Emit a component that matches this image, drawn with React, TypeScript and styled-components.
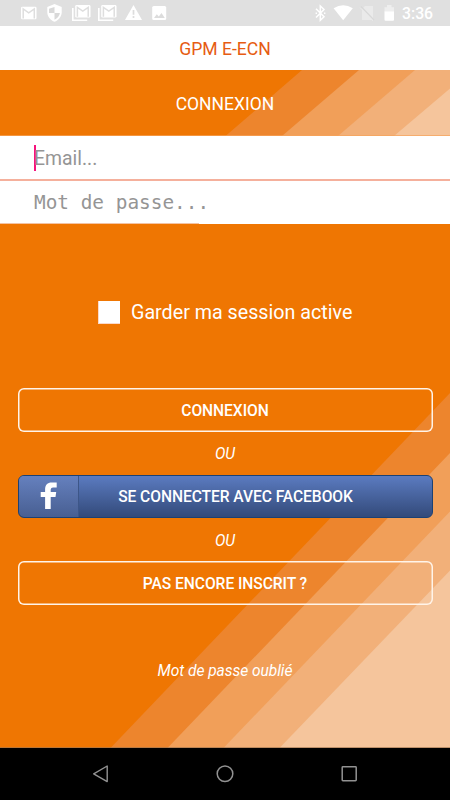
import React from 'react';
import styled, { createGlobalStyle } from 'styled-components';

const GlobalStyle = createGlobalStyle`
  * { box-sizing: border-box; }
  html, body { margin: 0; padding: 0; }
  body { font-family: Roboto, sans-serif; background: #000; overflow: hidden; }
`;

const Screen = styled.div`
  width: 450px;
  height: 800px;
  display: flex;
  flex-direction: column;
  background: #ef7602;
  color: #fff;
`;

const StatusBar = styled.div`
  height: 26px;
  flex: none;
  display: flex;
  align-items: center;
  justify-content: space-between;
  padding: 0 16px 0 19px;
  background: #e0e0e0;
`;

const Group = styled.div<{ $gap: number }>`
  display: flex;
  align-items: center;
  gap: ${(p) => p.$gap}px;
  svg { display: block; }
`;

const Clock = styled.span`
  width: 32px;
  font-size: 15.8px;
  font-weight: 500;
  line-height: 20px;
  padding-top: 2px;
  white-space: nowrap;
`;

const TitleBar = styled.div`
  height: 44px;
  flex: none;
  display: flex;
  align-items: center;
  justify-content: center;
  padding-top: 1px;
  background: #fff;
  color: #e65c12;
  font-size: 17.6px;
`;

const Header = styled.header`
  height: 66px;
  flex: none;
  display: grid;
  place-items: center;
  > * { grid-area: 1 / 1; }
`;

const Heading = styled.h1`
  margin: 0;
  padding-top: 1px;
  font-size: 17.5px;
  font-weight: 400;
  z-index: 1;
`;

const Field = styled.label<{ $mono?: boolean }>`
  flex: none;
  height: ${(p) => (p.$mono ? 43 : 45)}px;
  border-bottom: ${(p) => (p.$mono ? 'none' : '2px solid #f5b09c')};
  display: flex;
  align-items: center;
  padding: ${(p) => (p.$mono ? 0 : 2)}px 0 0 34px;
  background: #fff;
  color: #959595;
  font-size: 19.4px;
  font-family: ${(p) => (p.$mono ? '"DejaVu Sans Mono", monospace' : 'Roboto, sans-serif')};
  white-space: pre;
`;

const PasswordField = styled(Field)`
  background: linear-gradient(#f3c3a4, #f3c3a4) 0 100% / 199px 1px no-repeat #fff;
`;

const Caret = styled.i`
  width: 2px;
  height: 26px;
  margin: -2px -2px 0 0;
  background: #f5137c;
`;

const Main = styled.main`
  flex: 1;
  display: grid;
  min-height: 0;
  > * { grid-area: 1 / 1; }
`;

const Form = styled.div`
  display: flex;
  flex-direction: column;
  padding: 0 17.5px;
  z-index: 1;
`;

const KeepSession = styled.div`
  display: flex;
  align-items: center;
  gap: 11px;
  height: 24px;
  margin: 76px 0 64px 80.5px;
  font-size: 19.7px;
  white-space: nowrap;
`;

const Box = styled.i`
  width: 22px;
  height: 23px;
  background: #fff;
  border: 1px solid #fbd9cb;
  border-width: 0 0 1px 1px;
`;

const Button = styled.button`
  height: 43.6px;
  width: 415px;
  flex: none;
  padding: 2px 0 0;
  display: flex;
  align-items: center;
  justify-content: center;
  background: transparent;
  border: none;
  box-shadow: inset 0 0 0 1.5px #fff4e9;
  border-radius: 6px;
  color: #fff;
  font: 500 15.6px Roboto, sans-serif;
  letter-spacing: -0.06px;
`;

const FacebookButton = styled(Button)`
  padding: 0;
  overflow: hidden;
  box-shadow: none;
  border: 1px solid #1b4174;
  background: linear-gradient(#5b7bc0, #334a7a);
  justify-content: flex-start;
`;

const FacebookMark = styled.span`
  width: 60px;
  height: 42px;
  flex: none;
  border-right: 1px solid #3d5688;
  border-radius: 5px 0 0 5px;
  background: linear-gradient(#6681bf, #485f92);
  svg { display: block; }
`;

const FacebookLabel = styled.span`
  width: 314px;
  padding-top: 2px;
  text-align: center;
`;

const Separator = styled.div`
  height: 43.1px;
  flex: none;
  display: flex;
  align-items: center;
  justify-content: center;
  padding-top: 2px;
  font-size: 15.6px;
  font-style: italic;
`;

const Forgot = styled.a`
  align-self: center;
  margin-top: 56px;
  line-height: 20px;
  font-size: 15.6px;
  letter-spacing: -0.06px;
  font-style: italic;
`;

const NavBar = styled.nav`
  height: 52px;
  flex: none;
  background: #000;
  display: flex;
  justify-content: space-between;
  align-items: center;
  padding: 0 88px;
`;

const Gmail = () => (
  <svg width="20" height="20" viewBox="0 0 20 20">
    <rect x="2" y="3.7" width="15.5" height="12.6" rx="1.4" fill="#fff" />
    <path d="M4.2 15.6V6L9.7 9.8L15.3 6V15.6" fill="none" stroke="#dedede" strokeWidth="1.5" />
  </svg>
);

const GmailStack = () => (
  <svg width="20" height="20" viewBox="0 0 20 20">
    <path d="M.8 5V17.2H15.2" fill="none" stroke="#fff" strokeWidth="1.6" />
    <rect x="3.2" y="2" width="15.3" height="12.6" rx="1.4" fill="#fff" />
    <path d="M5.4 13.8V4.3L10.8 8L16.2 4.3V13.8" fill="none" stroke="#dedede" strokeWidth="1.5" />
  </svg>
);

const Shield = () => (
  <svg width="20" height="20" viewBox="0 0 20 20">
    <path d="M9.5 1L16.7 4V9.2C16.7 13.5 13.5 17.3 9.5 18.8C5.5 17.3 2.3 13.5 2.3 9.2V4Z" fill="#fff" />
    <path d="M9.5 4V10H4V5.8ZM9.5 10H14.9C14.5 13 12.3 15.3 9.5 16.8Z" fill="#d9d9d9" />
  </svg>
);

const Warning = () => (
  <svg width="20" height="20" viewBox="0 0 20 20">
    <path d="M9.5 2L18 17H1Z" fill="#fff" />
    <path d="M9.5 7V11.7M9.5 13V15" stroke="#ddd" strokeWidth="1.7" />
  </svg>
);

const Photo = () => (
  <svg width="20" height="20" viewBox="0 0 20 20">
    <rect x="2.2" y="3" width="14" height="14" rx="1.6" fill="#fff" />
    <path d="M4 15L6.8 11.3L8.8 13.5L11.5 10L14.8 15Z" fill="#dcdcdc" />
  </svg>
);

const StatusIcons = () => (
  <svg width="84" height="26" viewBox="314 0 84 26" fill="none">
    <path d="M316 8.7L324 16.7L320.3 20.2V6L324 9.5L316 17.5" stroke="#fff" strokeWidth="1.5" />
    <path d="M315.6 13.2h1.4M324 13.2h1.4" stroke="#fff" strokeWidth="1.4" />
    <path d="M333.6 8.3Q343.2 2 352.8 8.3L343.2 20.3Z" fill="#fff" />
    <path d="M362 9L365 6H373V20H362Z" fill="#eaeaea" />
    <path d="M361 6.5L374 20" stroke="#d8d8d8" strokeWidth="1.2" />
    <path d="M360 7.5L373 21" stroke="#eaeaea" strokeWidth="1" />
    <path d="M384.5 7.2H387V5H391.5V7.2H394V12H384.5Z" fill="#eee" />
    <path d="M384.5 11.5H394V19.7Q394 20.8 393 20.8H385.5Q384.5 20.8 384.5 19.7Z" fill="#fff" />
  </svg>
);

const HeaderStripes = () => (
  <svg width="450" height="66" viewBox="0 70 450 66">
    <path d="M302 70H450V136H225.5Z" fill="#ed852d" />
    <path d="M359 70H450V136H282Z" fill="#f19f59" />
    <path d="M415 70H450V136H338Z" fill="#f2b079" />
    <path d="M450 88.5V136H394Z" fill="#f5c59c" />
    <path d="M0 135.5H450" stroke="#f7a45b" strokeWidth="1" opacity=".7" />
  </svg>
);

const MainStripes = () => (
  <svg width="450" height="524" viewBox="0 224 450 524">
    <path d="M450 393V748H110.5Z" fill="#ed852d" />
    <path d="M450 453V748H167.5Z" fill="#f19f59" />
    <path d="M450 511.5V748H223.5Z" fill="#f2b079" />
    <path d="M450 570.5V748H279.5Z" fill="#f5c59c" />
    <path d="M0 747.5H450" stroke="#9e7550" opacity=".65" />
  </svg>
);

export default function App() {
  return (
    <>
      <GlobalStyle />
      <Screen>
        <StatusBar>
          <Group $gap={6.3}>
            <Gmail />
            <Shield />
            <GmailStack />
            <GmailStack />
            <Warning />
            <Photo />
          </Group>
          <Group $gap={4}>
            <StatusIcons />
            <Clock>3:36</Clock>
          </Group>
        </StatusBar>
        <TitleBar>GPM E-ECN</TitleBar>
        <Header>
          <HeaderStripes />
          <Heading>CONNEXION</Heading>
        </Header>
        <Field>
          <Caret />
          Email...
        </Field>
        <PasswordField $mono>Mot de passe...</PasswordField>
        <Main>
          <MainStripes />
          <Form>
            <KeepSession>
              <Box />
              Garder ma session active
            </KeepSession>
            <Button>CONNEXION</Button>
            <Separator>OU</Separator>
            <FacebookButton>
              <FacebookMark>
                <svg width="60" height="42" viewBox="19.3 475.5 60 42">
                  <path
                    d="M45.4 509.5V497.5H41V492.5H45.4V490C45.4 485.5 47.8 483 52 483H57V488H53.5C51.5 488 51 489 51 490.5V492.5H56.5L55.8 497.5H51V509.5Z"
                    fill="#fff"
                  />
                </svg>
              </FacebookMark>
              <FacebookLabel>SE CONNECTER AVEC FACEBOOK</FacebookLabel>
            </FacebookButton>
            <Separator>OU</Separator>
            <Button>PAS ENCORE INSCRIT ?</Button>
            <Forgot>Mot de passe oublié</Forgot>
          </Form>
        </Main>
        <NavBar>
          <svg width="24" height="24" viewBox="88 762 24 24" fill="none" stroke="#929292" strokeWidth="1.4">
            <path d="M93.7 773.8L107.2 766V781.6Z" strokeLinejoin="round" />
          </svg>
          <svg width="24" height="24" viewBox="213 762 24 24" fill="none" stroke="#929292" strokeWidth="1.5">
            <circle cx="225" cy="773.7" r="7.8" />
          </svg>
          <svg width="24" height="24" viewBox="338 762 24 24" fill="none" stroke="#929292" strokeWidth="1.5">
            <rect x="342.2" y="766.8" width="14" height="14" rx=".7" />
          </svg>
        </NavBar>
      </Screen>
    </>
  );
}
